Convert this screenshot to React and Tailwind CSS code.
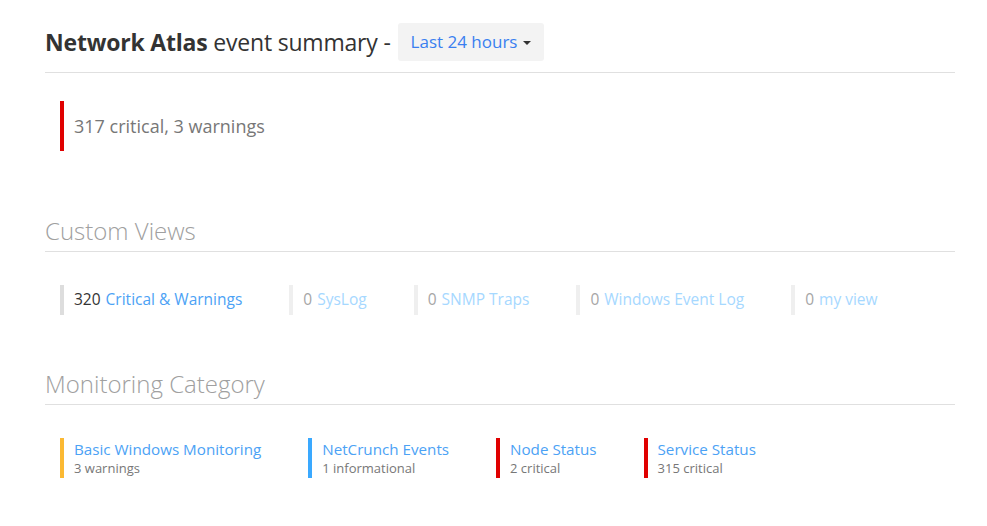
const VIEWS = [
  { count: 320, label: "Critical & Warnings", active: true },
  { count: 0, label: "SysLog" },
  { count: 0, label: "SNMP Traps" },
  { count: 0, label: "Windows Event Log" },
  { count: 0, label: "my view" },
];

const CATEGORIES = [
  { name: "Basic Windows Monitoring", info: "3 warnings", bar: "bg-[#fbb933]" },
  { name: "NetCrunch Events", info: "1 informational", bar: "bg-[#3aa9ff]" },
  { name: "Node Status", info: "2 critical", bar: "bg-[#e00000]" },
  { name: "Service Status", info: "315 critical", bar: "bg-[#e00000]" },
];

function SectionTitle({ children }) {
  return (
    <div className="border-b border-[#e0e0e0] pb-[3px]">
      <h2 className="text-[24px] font-light text-[#a0a0a0] leading-[34px]">{children}</h2>
    </div>
  );
}

export default function App() {
  return (
    <div className="min-h-[526px] bg-white pl-[45px] pr-[32px] pt-[23px] font-['Open_Sans',sans-serif]">
      {/* header */}
      <div className="flex items-center border-b border-[#e0e0e0] pb-[11px]">
        <h1 className="text-[23px] text-[#333] leading-[38px] tracking-[-0.2px]">
          <span className="font-bold">Network Atlas</span> event summary -
        </h1>
        <button className="ml-[7px] h-[38px] flex items-center gap-[6px] rounded-[3px] bg-[#f3f3f3] px-[13px] text-[17px] text-[#3a7ff0]">
          Last 24 hours
          <span className="mt-[2px] border-x-[4px] border-t-[4px] border-x-transparent border-t-[#333]" />
        </button>
      </div>

      {/* totals */}
      <div className="mt-[28px] ml-[15px] flex h-[50px] items-center border-l-[4px] border-[#e00000] pl-[10px]">
        <span className="text-[18px] text-[#777]">317 critical, 3 warnings</span>
      </div>

      <div className="mt-[63px]">
        <SectionTitle>Custom Views</SectionTitle>
      </div>
      <div className="mt-[33px] ml-[15px] flex">
        {VIEWS.map((v) => (
          <div
            key={v.label}
            className={
              "mr-[47px] flex h-[30px] items-center border-l-[4px] pl-[10px] text-[15.5px] " +
              (v.active ? "border-[#dddddd]" : "border-[#efefef]")
            }
          >
            <span className={v.active ? "text-[#333]" : "text-[#a6a6a6]"}>{v.count}</span>
            <a className={"ml-[5px] " + (v.active ? "text-[#4ca2f5]" : "text-[#a6d8ff]")}>{v.label}</a>
          </div>
        ))}
      </div>

      <div className="mt-[52px]">
        <SectionTitle>Monitoring Category</SectionTitle>
      </div>
      <div className="mt-[33px] ml-[15px] flex">
        {CATEGORIES.map((c) => (
          <div key={c.name} className="mr-[47px] flex h-[40px]">
            <div className={"w-[4px] " + c.bar} />
            <div className="pl-[10px] flex flex-col justify-center">
              <a className="text-[15.2px] leading-[20px] text-[#4ca2f5]">{c.name}</a>
              <span className="text-[13px] leading-[18px] text-[#777]">{c.info}</span>
            </div>
          </div>
        ))}
      </div>
    </div>
  );
}
